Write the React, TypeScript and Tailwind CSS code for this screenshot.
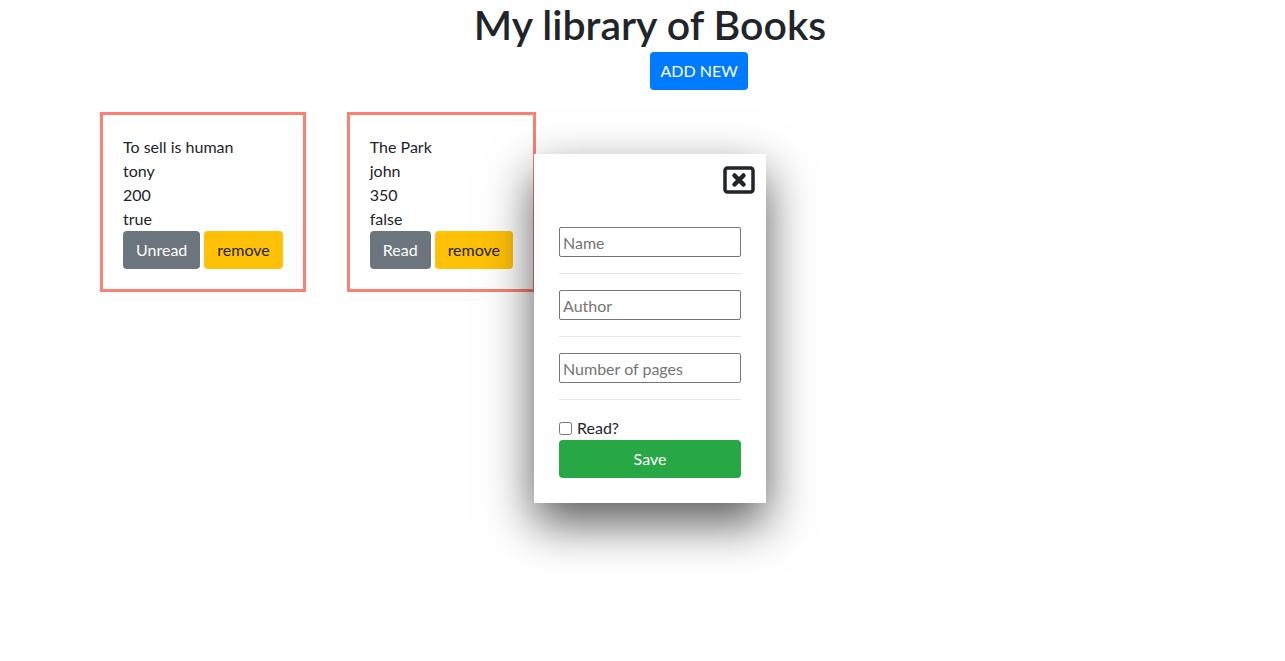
import { useState } from 'react';

type Book = { title: string; author: string; pages: number; read: boolean };

const books: Book[] = [
  { title: 'To sell is human', author: 'tony', pages: 200, read: true },
  { title: 'The Park', author: 'john', pages: 350, read: false },
];

const CloseIcon = () => (
  <svg width="32" height="28" viewBox="0 0 32 28" fill="none">
    <rect x="2" y="2" width="28" height="24" rx="2.5" stroke="#212529" strokeWidth="3.5" />
    <path d="M11.5 9.5l9 9M20.5 9.5l-9 9" stroke="#212529" strokeWidth="4.5" strokeLinecap="round" />
  </svg>
);

const BookCard = ({ book }: { book: Book }) => (
  <div className="border-[3px] border-[#fa8072] p-5 w-fit">
    <p>{book.title}</p>
    <p>{book.author}</p>
    <p>{book.pages}</p>
    <p>{String(book.read)}</p>
    <div className="flex gap-1">
      <button className="bg-[#6c757d] text-white rounded px-[13px] py-[7px] leading-6">
        {book.read ? 'Unread' : 'Read'}
      </button>
      <button className="bg-[#ffc107] text-[#212529] rounded px-[13px] py-[7px] leading-6">
        remove
      </button>
    </div>
  </div>
);

const Field = ({ placeholder }: { placeholder: string }) => (
  <>
    <input
      placeholder={placeholder}
      className="w-full h-[30px] border border-[#767676] rounded-[2px] px-[3px] placeholder:text-[#757575] outline-none"
    />
    <hr className="my-4 border-t border-[#e5e5e5]" />
  </>
);

export default function App() {
  const [read, setRead] = useState(false);

  return (
    <div className="relative min-h-[661px] bg-white text-[#212529] text-base leading-6 font-['Segoe_UI','Lato',sans-serif]">
      <h1 className="pl-[15px] pt-px text-center text-[41px] leading-[48px] font-semibold">
        My library of Books
      </h1>
      <div className="pl-[650px] mt-[3px]">
        <button className="bg-[#007bff] text-white rounded px-[10.5px] py-[7px] leading-6">
          ADD NEW
        </button>
      </div>
      <div className="flex gap-[41px] pl-[100px] mt-[22px]">
        {books.map((b) => (
          <BookCard key={b.title} book={b} />
        ))}
      </div>

      <div className="absolute left-[534px] top-[154px] w-[232px] bg-white pt-3 px-[25px] pb-[25px] shadow-[0_20px_45px_rgba(0,0,0,0.65)]">
        <div className="flex justify-end -mr-[14px]">
          <button className="block">
            <CloseIcon />
          </button>
        </div>
        <div className="mt-[33px]">
          <Field placeholder="Name" />
          <Field placeholder="Author" />
          <Field placeholder="Number of pages" />
          <label className="flex items-center gap-[5px]">
            <input
              type="checkbox"
              checked={read}
              onChange={(e) => setRead(e.target.checked)}
              className="w-[13px] h-[13px]"
            />
            Read?
          </label>
          <button className="w-full bg-[#28a745] text-white rounded px-3 py-[7px] leading-6">
            Save
          </button>
        </div>
      </div>
    </div>
  );
}
